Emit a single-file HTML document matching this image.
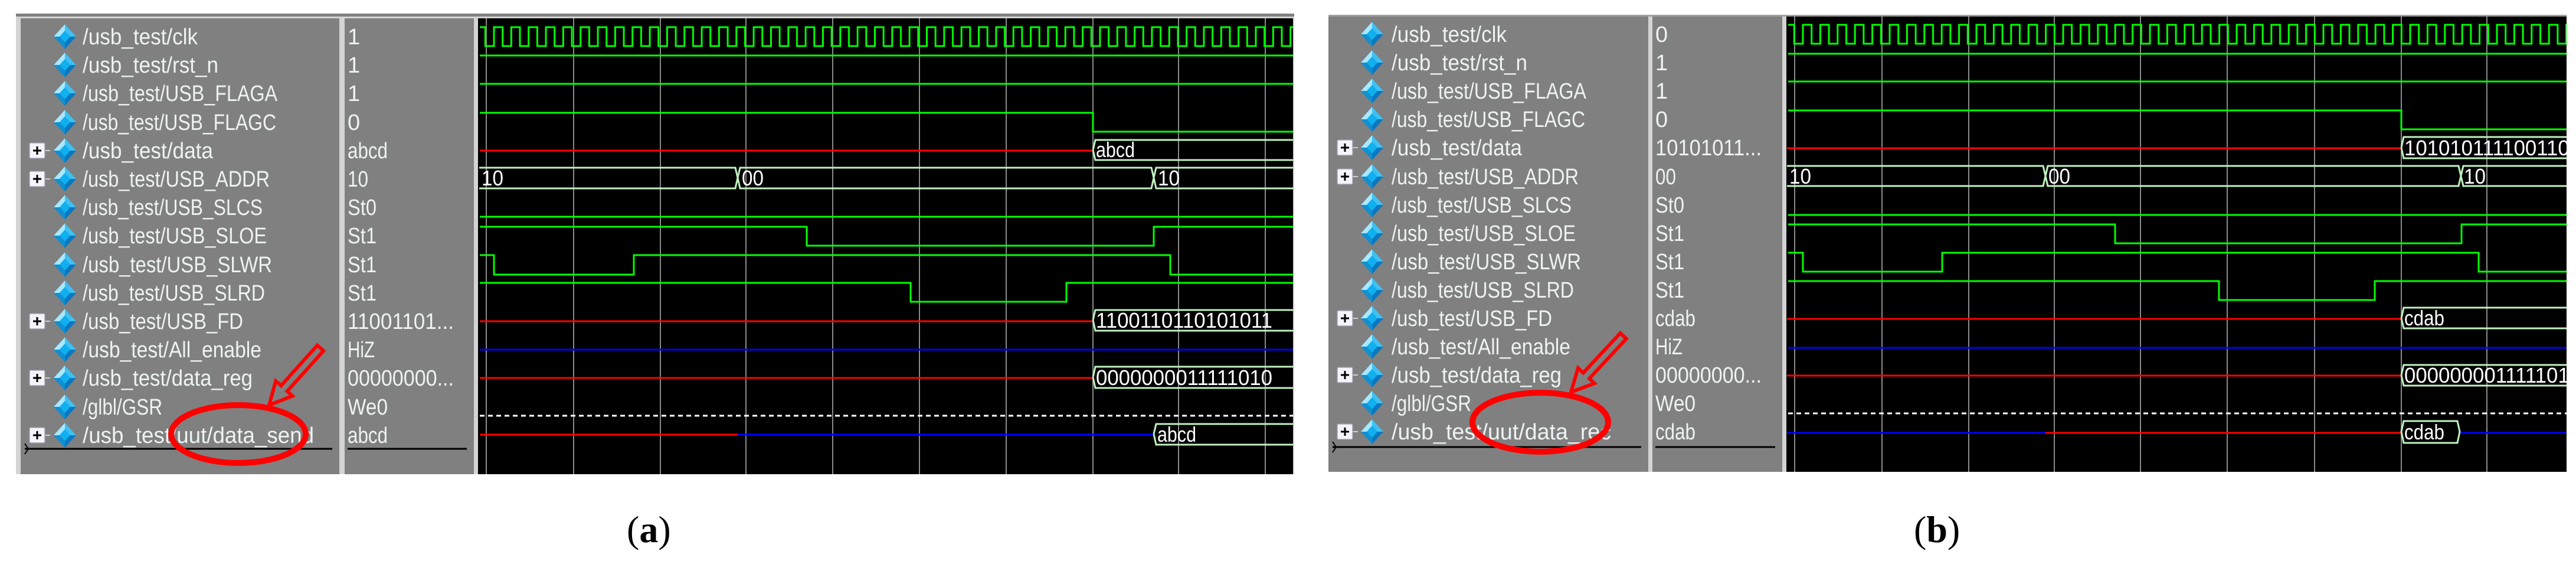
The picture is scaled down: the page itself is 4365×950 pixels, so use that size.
<!DOCTYPE html>
<html><head><meta charset="utf-8"><style>html,body{margin:0;padding:0;background:#fff}svg{display:block}</style></head><body>
<svg width="4365" height="950" viewBox="0 0 4365 950" xmlns="http://www.w3.org/2000/svg" font-family="'Liberation Sans', sans-serif">
<defs>
<pattern id="ca" patternUnits="userSpaceOnUse" x="835" y="44" width="29.34" height="40"><path d="M0,34 H2 V2 H16.67 V34 H29.34" fill="none" stroke="#00ff00" stroke-width="3"/></pattern>
<pattern id="cb" patternUnits="userSpaceOnUse" x="3053" y="40" width="29.4" height="40"><path d="M0,34 H2 V2 H16.7 V34 H29.4" fill="none" stroke="#00ff00" stroke-width="3"/></pattern>
<g id="dia"><polygon points="0,-21 19,0 0,21 -19,0" fill="#0a78c0"/><polygon points="0,-21 -19,0 -9,0 0,-10" fill="#a8e8ff"/><polygon points="0,-21 19,0 9,0 0,-10" fill="#40c0f0"/><polygon points="-9,0 0,-10 9,0 0,10" fill="#10b0f0"/><polygon points="-19,0 -9,0 0,10 0,21" fill="#1090d0"/></g>
<g id="plus"><line x1="0" y1="0" x2="22" y2="0" stroke="#d0d0d0" stroke-width="2"/><rect x="-13" y="-13" width="26" height="26" fill="#f4f4fa" stroke="#a0a0b0" stroke-width="1.5" rx="2"/><path d="M-7,0 H7 M0,-7 V7" stroke="#000" stroke-width="3"/></g>
<clipPath id="wa"><rect x="812" y="31" width="1379" height="772"/></clipPath>
<clipPath id="wb"><rect x="3028" y="28" width="1321" height="771"/></clipPath>
<clipPath id="na"><rect x="35" y="31" width="540" height="772"/></clipPath>
<clipPath id="nb"><rect x="2251" y="28" width="542" height="771"/></clipPath>
</defs>
<rect width="4365" height="950" fill="#fff"/>

<!-- ============ PANEL A ============ -->
<rect x="27" y="23" width="2166" height="780" fill="#d4d4d4"/>
<rect x="27" y="23" width="2166" height="5" fill="#808080"/>
<rect x="35" y="31" width="540" height="772" fill="#808080"/>
<rect x="584" y="31" width="219" height="772" fill="#808080"/>
<rect x="810" y="31" width="1381" height="772" fill="#000"/>
<g fill="#eef2f2" font-size="38">
<g clip-path="url(#na)">
<text x="140" y="75" textLength="195" lengthAdjust="spacingAndGlyphs">/usb_test/clk</text>
<text x="140" y="123" textLength="230" lengthAdjust="spacingAndGlyphs">/usb_test/rst_n</text>
<text x="140" y="171" textLength="330" lengthAdjust="spacingAndGlyphs">/usb_test/USB_FLAGA</text>
<text x="140" y="220" textLength="328" lengthAdjust="spacingAndGlyphs">/usb_test/USB_FLAGC</text>
<text x="140" y="268" textLength="221" lengthAdjust="spacingAndGlyphs">/usb_test/data</text>
<text x="140" y="316" textLength="317" lengthAdjust="spacingAndGlyphs">/usb_test/USB_ADDR</text>
<text x="140" y="364" textLength="305" lengthAdjust="spacingAndGlyphs">/usb_test/USB_SLCS</text>
<text x="140" y="412" textLength="312" lengthAdjust="spacingAndGlyphs">/usb_test/USB_SLOE</text>
<text x="140" y="461" textLength="321" lengthAdjust="spacingAndGlyphs">/usb_test/USB_SLWR</text>
<text x="140" y="509" textLength="309" lengthAdjust="spacingAndGlyphs">/usb_test/USB_SLRD</text>
<text x="140" y="557" textLength="272" lengthAdjust="spacingAndGlyphs">/usb_test/USB_FD</text>
<text x="140" y="605" textLength="303" lengthAdjust="spacingAndGlyphs">/usb_test/All_enable</text>
<text x="140" y="653" textLength="288" lengthAdjust="spacingAndGlyphs">/usb_test/data_reg</text>
<text x="140" y="702" textLength="135" lengthAdjust="spacingAndGlyphs">/glbl/GSR</text>
<text x="140" y="750" textLength="392" lengthAdjust="spacingAndGlyphs">/usb_test/uut/data_send</text>
</g>
<text x="589" y="75">1</text>
<text x="589" y="123">1</text>
<text x="589" y="171">1</text>
<text x="589" y="220">0</text>
<text x="589" y="268" textLength="68" lengthAdjust="spacingAndGlyphs">abcd</text>
<text x="589" y="316" textLength="35" lengthAdjust="spacingAndGlyphs">10</text>
<text x="589" y="364" textLength="49" lengthAdjust="spacingAndGlyphs">St0</text>
<text x="589" y="412" textLength="49" lengthAdjust="spacingAndGlyphs">St1</text>
<text x="589" y="461" textLength="49" lengthAdjust="spacingAndGlyphs">St1</text>
<text x="589" y="509" textLength="49" lengthAdjust="spacingAndGlyphs">St1</text>
<text x="589" y="557" textLength="180" lengthAdjust="spacingAndGlyphs">11001101...</text>
<text x="589" y="605" textLength="46" lengthAdjust="spacingAndGlyphs">HiZ</text>
<text x="589" y="653" textLength="180" lengthAdjust="spacingAndGlyphs">00000000...</text>
<text x="589" y="702" textLength="68" lengthAdjust="spacingAndGlyphs">We0</text>
<text x="589" y="750" textLength="68" lengthAdjust="spacingAndGlyphs">abcd</text>
</g>
<g>
<use href="#dia" x="110" y="62"/><use href="#dia" x="110" y="110"/><use href="#dia" x="110" y="158"/><use href="#dia" x="110" y="207"/>
<use href="#dia" x="110" y="255"/><use href="#dia" x="110" y="303"/><use href="#dia" x="110" y="351"/><use href="#dia" x="110" y="399"/>
<use href="#dia" x="110" y="448"/><use href="#dia" x="110" y="496"/><use href="#dia" x="110" y="544"/><use href="#dia" x="110" y="592"/>
<use href="#dia" x="110" y="640"/><use href="#dia" x="110" y="689"/><use href="#dia" x="110" y="737"/>
<use href="#plus" x="63" y="255"/><use href="#plus" x="63" y="303"/><use href="#plus" x="63" y="544"/><use href="#plus" x="63" y="640"/><use href="#plus" x="63" y="737"/>
</g>
<path d="M42,760 H563 M589,760 H791" stroke="#000" stroke-width="3"/>
<path d="M42,751 L48,760 L42,769" fill="none" stroke="#000" stroke-width="2"/>

<g clip-path="url(#wa)">
<g stroke="#8a8a8a" stroke-width="2">
<line x1="824" y1="31" x2="824" y2="803"/><line x1="972" y1="31" x2="972" y2="803"/><line x1="1119" y1="31" x2="1119" y2="803"/><line x1="1264" y1="31" x2="1264" y2="803"/><line x1="1411" y1="31" x2="1411" y2="803"/><line x1="1558" y1="31" x2="1558" y2="803"/><line x1="1705" y1="31" x2="1705" y2="803"/><line x1="1852" y1="31" x2="1852" y2="803"/><line x1="1997" y1="31" x2="1997" y2="803"/><line x1="2144" y1="31" x2="2144" y2="803"/>
</g>
<rect x="813" y="44" width="1378" height="40" fill="url(#ca)"/>
<g fill="none" stroke-width="3">
<path d="M813,94 H2191 M813,142 H2191 M813,191 H1852 V223 H2191 M813,367 H2191" stroke="#00ff00"/>
<path d="M813,384 H1367 V416 H1955 V384 H2191" stroke="#00ff00"/>
<path d="M813,432 H837 V465 H1074 V432 H1983 V465 H2191" stroke="#00ff00"/>
<path d="M813,479 H1543 V511 H1807 V479 H2191" stroke="#00ff00"/>
<path d="M813,255 H1852 M813,544 H1852 M813,640 H1852 M813,736 H1250" stroke="#ff0000"/>
<path d="M813,592 H2191 M1250,736 H1955" stroke="#0000ff"/>
<path d="M813,704 H2191" stroke="#ffffff" stroke-dasharray="8,6"/>
<g stroke="#c0f0c0">
<path d="M1852,254 L1856,237 H2195 M1852,254 L1856,271 H2195"/>
<path d="M810,284 H1246 L1250,301 L1254,284 H1951 L1955,301 L1959,284 H2195 M810,319 H1246 L1250,301 L1254,319 H1951 L1955,301 L1959,319 H2195"/>
<path d="M1852,542 L1856,525 H2195 M1852,542 L1856,560 H2195"/>
<path d="M1852,639 L1856,621 H2195 M1852,639 L1856,657 H2195"/>
<path d="M1955,735 L1959,718 H2195 M1955,735 L1959,753 H2195"/>
</g>
</g>
<g fill="#ffffff" font-size="36">
<text x="1857" y="266" textLength="66" lengthAdjust="spacingAndGlyphs">abcd</text>
<text x="816" y="314" textLength="37" lengthAdjust="spacingAndGlyphs">10</text>
<text x="1257" y="314" textLength="37" lengthAdjust="spacingAndGlyphs">00</text>
<text x="1962" y="314" textLength="37" lengthAdjust="spacingAndGlyphs">10</text>
<text x="1857" y="555" textLength="299" lengthAdjust="spacingAndGlyphs">1100110110101011</text>
<text x="1857" y="652" textLength="299" lengthAdjust="spacingAndGlyphs">0000000011111010</text>
<text x="1961" y="748" textLength="66" lengthAdjust="spacingAndGlyphs">abcd</text>
</g>
</g>
<!-- annotations a -->
<g transform="translate(456,686) rotate(132)"><polygon points="0,0 -38,-19 -38,-7 -130,-7 -130,7 -38,7 -38,19" fill="#808080" stroke="#ff0000" stroke-width="6"/></g>
<ellipse cx="404" cy="735" rx="114" ry="49" fill="none" stroke="#ff0000" stroke-width="10"/>
<text x="1062" y="918" font-family="'Liberation Serif', serif" font-size="64" fill="#000">(<tspan font-weight="bold">a</tspan>)</text>

<!-- ============ PANEL B ============ -->
<rect x="2251" y="25" width="2098" height="774" fill="#d4d4d4"/>
<rect x="2251" y="25" width="2098" height="3" fill="#a0a0a0"/>
<rect x="2251" y="28" width="542" height="771" fill="#808080"/>
<rect x="2800" y="28" width="220" height="771" fill="#808080"/>
<rect x="3027" y="28" width="1322" height="771" fill="#000"/>
<g fill="#eef2f2" font-size="38">
<g clip-path="url(#nb)">
<text x="2358" y="71" textLength="195" lengthAdjust="spacingAndGlyphs">/usb_test/clk</text>
<text x="2358" y="119" textLength="230" lengthAdjust="spacingAndGlyphs">/usb_test/rst_n</text>
<text x="2358" y="167" textLength="330" lengthAdjust="spacingAndGlyphs">/usb_test/USB_FLAGA</text>
<text x="2358" y="215" textLength="328" lengthAdjust="spacingAndGlyphs">/usb_test/USB_FLAGC</text>
<text x="2358" y="263" textLength="221" lengthAdjust="spacingAndGlyphs">/usb_test/data</text>
<text x="2358" y="312" textLength="317" lengthAdjust="spacingAndGlyphs">/usb_test/USB_ADDR</text>
<text x="2358" y="360" textLength="305" lengthAdjust="spacingAndGlyphs">/usb_test/USB_SLCS</text>
<text x="2358" y="408" textLength="312" lengthAdjust="spacingAndGlyphs">/usb_test/USB_SLOE</text>
<text x="2358" y="456" textLength="321" lengthAdjust="spacingAndGlyphs">/usb_test/USB_SLWR</text>
<text x="2358" y="504" textLength="309" lengthAdjust="spacingAndGlyphs">/usb_test/USB_SLRD</text>
<text x="2358" y="552" textLength="272" lengthAdjust="spacingAndGlyphs">/usb_test/USB_FD</text>
<text x="2358" y="600" textLength="303" lengthAdjust="spacingAndGlyphs">/usb_test/All_enable</text>
<text x="2358" y="648" textLength="288" lengthAdjust="spacingAndGlyphs">/usb_test/data_reg</text>
<text x="2358" y="696" textLength="135" lengthAdjust="spacingAndGlyphs">/glbl/GSR</text>
<text x="2358" y="744" textLength="372" lengthAdjust="spacingAndGlyphs">/usb_test/uut/data_rec</text>
</g>
<text x="2805" y="71">0</text>
<text x="2805" y="119">1</text>
<text x="2805" y="167">1</text>
<text x="2805" y="215">0</text>
<text x="2805" y="263" textLength="180" lengthAdjust="spacingAndGlyphs">10101011...</text>
<text x="2805" y="312" textLength="35" lengthAdjust="spacingAndGlyphs">00</text>
<text x="2805" y="360" textLength="49" lengthAdjust="spacingAndGlyphs">St0</text>
<text x="2805" y="408" textLength="49" lengthAdjust="spacingAndGlyphs">St1</text>
<text x="2805" y="456" textLength="49" lengthAdjust="spacingAndGlyphs">St1</text>
<text x="2805" y="504" textLength="49" lengthAdjust="spacingAndGlyphs">St1</text>
<text x="2805" y="552" textLength="68" lengthAdjust="spacingAndGlyphs">cdab</text>
<text x="2805" y="600" textLength="46" lengthAdjust="spacingAndGlyphs">HiZ</text>
<text x="2805" y="648" textLength="180" lengthAdjust="spacingAndGlyphs">00000000...</text>
<text x="2805" y="696" textLength="68" lengthAdjust="spacingAndGlyphs">We0</text>
<text x="2805" y="744" textLength="68" lengthAdjust="spacingAndGlyphs">cdab</text>
</g>
<g>
<use href="#dia" x="2325" y="58"/><use href="#dia" x="2325" y="106"/><use href="#dia" x="2325" y="154"/><use href="#dia" x="2325" y="202"/>
<use href="#dia" x="2325" y="250"/><use href="#dia" x="2325" y="299"/><use href="#dia" x="2325" y="347"/><use href="#dia" x="2325" y="395"/>
<use href="#dia" x="2325" y="443"/><use href="#dia" x="2325" y="491"/><use href="#dia" x="2325" y="539"/><use href="#dia" x="2325" y="587"/>
<use href="#dia" x="2325" y="635"/><use href="#dia" x="2325" y="683"/><use href="#dia" x="2325" y="731"/>
<use href="#plus" x="2279" y="250"/><use href="#plus" x="2279" y="299"/><use href="#plus" x="2279" y="539"/><use href="#plus" x="2279" y="635"/><use href="#plus" x="2279" y="731"/>
</g>
<path d="M2258,757 H2781 M2805,757 H3008" stroke="#000" stroke-width="3"/>
<path d="M2258,748 L2264,757 L2258,766" fill="none" stroke="#000" stroke-width="2"/>

<g clip-path="url(#wb)">
<g stroke="#8a8a8a" stroke-width="2">
<line x1="3041" y1="28" x2="3041" y2="799"/><line x1="3189" y1="28" x2="3189" y2="799"/><line x1="3336" y1="28" x2="3336" y2="799"/><line x1="3481" y1="28" x2="3481" y2="799"/><line x1="3627" y1="28" x2="3627" y2="799"/><line x1="3774" y1="28" x2="3774" y2="799"/><line x1="3922" y1="28" x2="3922" y2="799"/><line x1="4069" y1="28" x2="4069" y2="799"/><line x1="4214" y1="28" x2="4214" y2="799"/>
</g>
<rect x="3030" y="40" width="1319" height="40" fill="url(#cb)"/>
<g fill="none" stroke-width="3">
<path d="M3030,91 H4349 M3030,138 H4349 M3030,187 H4069 V219 H4349 M3030,364 H4349" stroke="#00ff00"/>
<path d="M3030,380 H3584 V412 H4171 V380 H4349" stroke="#00ff00"/>
<path d="M3030,428 H3055 V460 H3291 V428 H4200 V460 H4349" stroke="#00ff00"/>
<path d="M3030,476 H3760 V508 H4024 V476 H4349" stroke="#00ff00"/>
<path d="M3028,251 H4069 M3028,540 H4069 M3028,636 H4069 M3466,733 H4069" stroke="#ff0000"/>
<path d="M3030,589 H4349 M3028,733 H3466 M4168,733 H4349" stroke="#0000ff"/>
<path d="M3030,700 H4349" stroke="#ffffff" stroke-dasharray="8,6"/>
<g stroke="#c0f0c0">
<path d="M4069,250 L4073,232 H4355 M4069,250 L4073,268 H4355"/>
<path d="M3027,281 H3462 L3466,298 L3470,281 H4166 L4170,298 L4174,281 H4355 M3027,315 H3462 L3466,298 L3470,315 H4166 L4170,298 L4174,315 H4355"/>
<path d="M4069,539 L4073,521 H4355 M4069,539 L4073,556 H4355"/>
<path d="M4069,635 L4073,618 H4355 M4069,635 L4073,653 H4355"/>
<path d="M4069,731 L4073,713 H4164 L4168,731 L4164,750 H4073 Z"/>
</g>
</g>
<g fill="#ffffff" font-size="36">
<text x="4074" y="263" textLength="299" lengthAdjust="spacingAndGlyphs">1010101111001100</text>
<text x="3032" y="311" textLength="37" lengthAdjust="spacingAndGlyphs">10</text>
<text x="3471" y="311" textLength="37" lengthAdjust="spacingAndGlyphs">00</text>
<text x="4175" y="311" textLength="37" lengthAdjust="spacingAndGlyphs">10</text>
<text x="4074" y="551" textLength="68" lengthAdjust="spacingAndGlyphs">cdab</text>
<text x="4074" y="648" textLength="299" lengthAdjust="spacingAndGlyphs">0000000011111010</text>
<text x="4074" y="744" textLength="68" lengthAdjust="spacingAndGlyphs">cdab</text>
</g>
</g>
<!-- annotations b -->
<g transform="translate(2662,664) rotate(133)"><polygon points="0,0 -38,-19 -38,-7 -130,-7 -130,7 -38,7 -38,19" fill="#808080" stroke="#ff0000" stroke-width="6"/></g>
<ellipse cx="2610" cy="715" rx="115" ry="50" fill="none" stroke="#ff0000" stroke-width="10"/>
<text x="3243" y="918" font-family="'Liberation Serif', serif" font-size="64" fill="#000">(<tspan font-weight="bold">b</tspan>)</text>
</svg>
</body></html>
